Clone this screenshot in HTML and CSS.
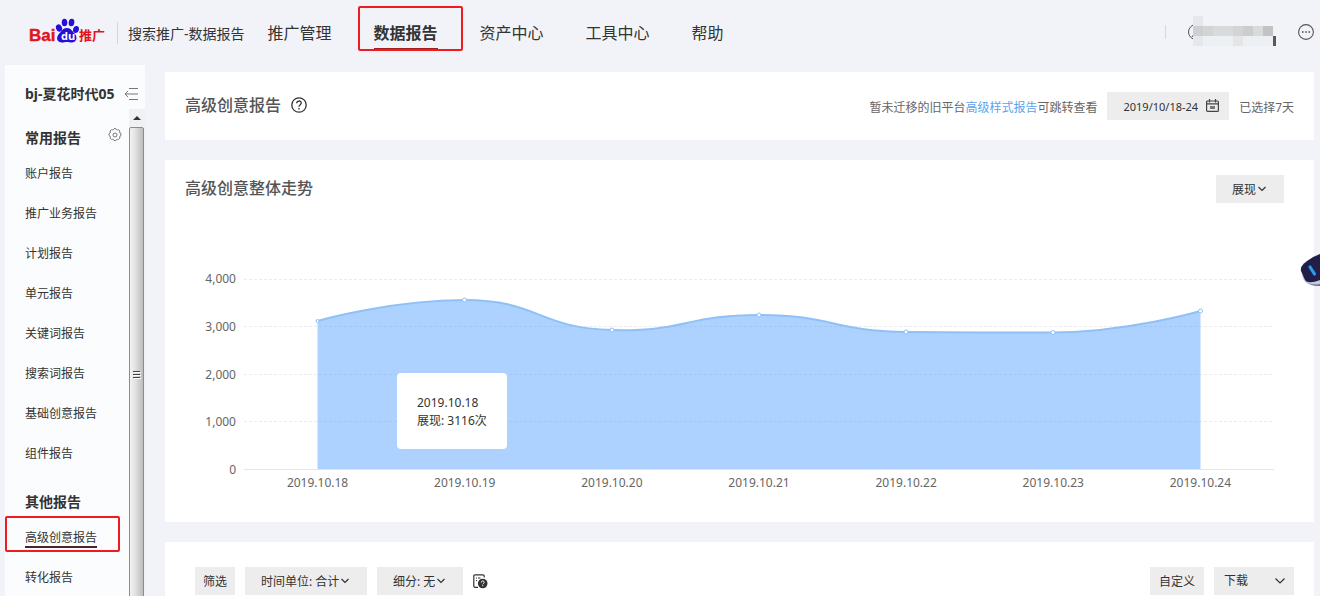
FILE: index.html
```html
<!DOCTYPE html>
<html lang="zh-CN">
<head>
<meta charset="utf-8">
<title>搜索推广-数据报告</title>
<link rel="stylesheet" href="styles.css">
</head>
<body>
<header class="topbar">
  <a class="logo" href="#" aria-label="Baidu 推广">
    <svg width="78" height="28" viewBox="0 0 78 28">
      <text class="logo-bai" x="0" y="24">Bai</text>
      <g fill="#2610d8">
        <ellipse cx="30" cy="11" rx="3" ry="3.8" transform="rotate(-20 30 11)"/>
        <ellipse cx="35.500" cy="5.500" rx="2.800" ry="3.800"/>
        <ellipse cx="42.500" cy="5.500" rx="2.800" ry="3.800" transform="rotate(10 42.500 5.500)"/>
        <ellipse cx="47" cy="12.500" rx="2.900" ry="3.600" transform="rotate(15 47 12.500)"/>
        <path d="M38 11c4 0 5 3 8 6 3 4 1 8.500-3 8.500-2 0-3-.5-5-.5s-3 .5-5 .5c-4.500 0-6.500-4-3.500-8 3-3 4-6.500 8.500-6.500z"/>
      </g>
      <text class="logo-du" x="32" y="23">du</text>
      <text class="logo-cn" x="50" y="23">推广</text>
    </svg>
  </a>
  <span class="product">搜索推广-数据报告</span>
  <nav class="nav">
    <a href="#">推广管理</a>
    <a class="current" href="#">数据报告</a>
    <a href="#">资产中心</a>
    <a href="#">工具中心</a>
    <a href="#">帮助</a>
  </nav>
  <div class="account">
    <svg class="account-name" width="90" height="32" viewBox="0 0 90 32" aria-hidden="true">
      <circle cx="9" cy="16" r="7.500" fill="none" stroke="#555"/>
      <path d="M5 21l2-3" stroke="#555"/>
      <path fill="#e3e8ec" d="M6 0h10v30H6z"/>
      <path fill="#cfcfcf" d="M6 10h10v10H6z"/>
      <path fill="#d3d4d5" d="M16 10h10v10H16zM46 10h10v10H46z"/>
      <path fill="#d8dadb" d="M26 10h20v10H26zM66 10h10v10H66z"/>
      <path fill="#cdcdcd" d="M56 10h10v10H56z"/>
      <path fill="#c3c3c3" d="M76 10h10v10H76z"/>
      <path fill="#edf0f3" d="M16 20h30v10H16zM56 20h30v10H56z"/>
      <path fill="#e4e5e6" d="M46 20h10v10H46z"/>
      <path fill="#58595b" d="M86 20h3v10h-3z"/>
    </svg>
    <button class="icon-button" aria-label="更多">
      <svg width="16" height="16" viewBox="0 0 16 16"><circle cx="8" cy="8" r="7.400" fill="none" stroke="#555" stroke-width="1.100"/><path fill="#444" d="M4 7.200h1.500v1.500H4zM7.250 7.200h1.500v1.500h-1.500zM10.500 7.200H12v1.500h-1.500z"/></svg>
    </button>
  </div>
</header>

<div class="body">
  <aside class="sidebar">
    <div class="side-title">
      <span>bj-夏花时代05</span>
      <button class="icon-button" aria-label="收起">
        <svg width="15" height="14" viewBox="0 0 15 14" fill="none" stroke="#777"><path d="M5 1.500h9M1 7h13M5 12.500h9M4 4L1 7l3 3"/></svg>
      </button>
    </div>
    <div class="side-scroll">
      <div class="side-list">
        <section>
          <h2>常用报告
            <button class="icon-button" aria-label="设置">
              <svg width="14" height="14" viewBox="0 0 14 14" fill="none" stroke="#777"><circle cx="7" cy="7" r="2"/><path d="M5.600 1.500L6.100.6h1.800l.5.900 1.200.5 1-.3 1.300 1.300-.3 1 .5 1.200.9.500v1.800l-.9.500-.5 1.200.3 1-1.300 1.300-1-.3-1.200.5-.5.900H6.100l-.5-.9-1.200-.5-1 .3-1.300-1.300.3-1-.5-1.200-.9-.5V5.700l.9-.5.500-1.200-.3-1 1.300-1.300 1 .3z"/></svg>
            </button>
          </h2>
          <ul>
            <li><a href="#">账户报告</a></li>
            <li><a href="#">推广业务报告</a></li>
            <li><a href="#">计划报告</a></li>
            <li><a href="#">单元报告</a></li>
            <li><a href="#">关键词报告</a></li>
            <li><a href="#">搜索词报告</a></li>
            <li><a href="#">基础创意报告</a></li>
            <li><a href="#">组件报告</a></li>
          </ul>
        </section>
        <section>
          <h2>其他报告</h2>
          <ul>
            <li class="current"><a href="#">高级创意报告</a></li>
            <li><a href="#">转化报告</a></li>
          </ul>
        </section>
      </div>
      <div class="scrollbar" aria-hidden="true">
        <div class="scroll-up"><svg width="8" height="4" viewBox="0 0 8 4"><path d="M4 0l4 4H0z" fill="#333"/></svg></div>
        <div class="scroll-thumb"><svg width="8" height="9" viewBox="0 0 8 9"><path d="M0 .5h7M0 3.500h7M0 6.500h7" stroke="#444"/><path d="M1 1.500h7M1 4.500h7M1 7.500h7" stroke="#fff"/></svg></div>
      </div>
    </div>
  </aside>

  <main class="content">
    <section class="card heading-card">
      <h1>高级创意报告</h1>
      <button class="icon-button help" aria-label="帮助">
        <svg width="16" height="16" viewBox="0 0 16 16" fill="none" stroke="#333" stroke-width="1.300"><circle cx="8" cy="8" r="7.200"/><path d="M5.700 6.300c0-3 4.600-3 4.600-.2 0 1.700-2.300 1.700-2.300 3.600M8 11v1.500"/></svg>
      </button>
      <p class="note">暂未迁移的旧平台<a href="#">高级样式报告</a>可跳转查看</p>
      <button class="date"><span>2019/10/18-24</span>
        <svg width="13" height="13" viewBox="0 0 13 13" fill="none" stroke="#444" stroke-width="1.200"><rect x=".6" y="2" width="11.800" height="10.400" rx="1"/><path d="M.6 4.800h11.800M3.500 0v3.500M9.500 0v3.500"/><path d="M4 7h5v3H4z" fill="#777" stroke="none"/></svg>
      </button>
      <span class="days">已选择7天</span>
    </section>

    <section class="card chart-card">
      <div class="chart-head">
        <h2>高级创意整体走势</h2>
        <div class="dropdown">
          <select aria-label="指标"><option>展现</option></select>
          <svg width="8" height="6" viewBox="0 0 8 6"><path d="M.5 1L4 4.500 7.500 1"/></svg>
        </div>
      </div>
      <div class="chart">
        <div class="y-axis"><span>4,000</span><span>3,000</span><span>2,000</span><span>1,000</span><span>0</span></div>
        <div class="plot">
          <svg class="plot-drawing" viewBox="0 0 1030 191" preserveAspectRatio="none" role="img" aria-label="展现走势">
            <path class="area" d="M73.500 42C73.500 42 147 21 220.500 21C294 21 294 49 368 51C441 53 441 36 515 36C588 36 588 52 662 53C735 53.500 735 53.500 809 53.500C882 53.500 956.500 32 956.500 32V190H73.500Z"/>
            <path class="grid" d="M0 .5H1030M0 47.500H1030M0 95.500H1030M0 142.500H1030"/>
            <path class="axis" d="M0 190.500H1030"/>
            <path class="line" d="M73.500 42C73.500 42 147 21 220.500 21C294 21 294 49 368 51C441 53 441 36 515 36C588 36 588 52 662 53C735 53.500 735 53.500 809 53.500C882 53.500 956.500 32 956.500 32"/>
            <g class="points"><circle cx="73.500" cy="42" r="1.500"/><circle cx="220.500" cy="21" r="2"/><circle cx="368" cy="51" r="2"/><circle cx="515" cy="36" r="2"/><circle cx="662" cy="53" r="2"/><circle cx="809" cy="53.500" r="2"/><circle cx="956.500" cy="32" r="2"/></g>
          </svg>
          <div class="tooltip">2019.10.18<br>展现: 3116次</div>
        </div>
        <div class="x-axis"><span>2019.10.18</span><span>2019.10.19</span><span>2019.10.20</span><span>2019.10.21</span><span>2019.10.22</span><span>2019.10.23</span><span>2019.10.24</span></div>
      </div>
    </section>

    <section class="card toolbar">
      <button class="plain">筛选</button>
      <div class="dropdown">
        <select aria-label="时间单位"><option>时间单位: 合计</option></select>
        <svg width="8" height="6" viewBox="0 0 8 6"><path d="M.5 1L4 4.500 7.500 1"/></svg>
      </div>
      <div class="dropdown">
        <select aria-label="细分"><option>细分: 无</option></select>
        <svg width="8" height="6" viewBox="0 0 8 6"><path d="M.5 1L4 4.500 7.500 1"/></svg>
      </div>
      <button class="icon-button" aria-label="报告说明">
        <svg width="15" height="15" viewBox="0 0 15 15"><path d="M5 13.400H2A1.200 1.200 0 0 1 .8 12V2A1.200 1.200 0 0 1 2 .8h8A1.200 1.200 0 0 1 11.200 2v1.500M3 4h1M5 4h2.500M3 6.500h1" fill="none" stroke="#333" stroke-width="1.200"/><circle cx="9.700" cy="9.500" r="4.800" fill="#333"/><path d="M8.300 8.500c0-2 2.900-2 2.900-.1 0 1-1.400 1-1.400 2M9.700 11.200v1" fill="none" stroke="#fff"/></svg>
      </button>
      <button class="plain custom">自定义</button>
      <div class="dropdown download">
        <select aria-label="下载"><option>下载</option></select>
        <svg width="10" height="6" viewBox="0 0 10 6"><path d="M.5 .5L5 5 9.500 .5"/></svg>
      </div>
    </section>
  </main>
</div>

<button class="assistant" aria-label="智能助手">
  <svg width="20" height="34" viewBox="0 0 20 34"><path d="M2 22C3 29 9 34 20 33V20z" fill="#c5c9dc"/><path d="M6 28q5 5 14 3V33Q10 33 6 28z" fill="#6b6b8d"/><path d="M1 18C0 14 3 11 7 8Q14 3 20 1v26c-8 3-13 3-15 0z" fill="#211f4a"/><path d="M10 14l4.500 7" stroke="#2b9cf0" stroke-width="3.200" stroke-linecap="round"/></svg>
</button>
</body>
</html>
```

FILE: styles.css
```css
* { box-sizing: border-box; }

body {
  margin: 0;
  height: 100vh;
  overflow: hidden;
  display: flex;
  flex-direction: column;
  background: #f2f3f8;
  color: #333;
  font: 12px/18px "Noto Sans", "Noto Sans CJK SC", sans-serif;
}

h1, h2, p, ul { margin: 0; padding: 0; }
ul { list-style: none; }
a { color: inherit; text-decoration: none; }
svg { display: block; }
button, select { font: inherit; color: inherit; border: 0; border-radius: 0; padding: 0; }

.icon-button { background: none; flex: none; }

/* Top bar */
.topbar {
  flex: none;
  display: flex;
  align-items: center;
  height: 65px;
  padding: 0 6px 0 29px;
}
.logo { padding-bottom: 4px; }
.logo-bai { font: bold 17px "Liberation Sans", sans-serif; fill: #e1141e; stroke: #e1141e; stroke-width: .4px; }
.logo-du { font: bold 11px "Open Sans", sans-serif; fill: #fff; }
.logo-cn { font: bold 13px "Noto Sans CJK SC", sans-serif; fill: #e1141e; }
.product {
  margin-left: 10px;
  padding: 2px 0 0 10px;
  border-left: 1px solid #d4d6db;
  font-size: 14px;
  line-height: 20px;
  white-space: nowrap;
}
.nav {
  display: flex;
  gap: 42px;
  margin-left: 23px;
  font-size: 16px;
  line-height: 30px;
  white-space: nowrap;
}
.nav .current {
  position: relative;
  font-weight: bold;
  box-shadow: 0 2px #a51c1c;
}
.nav .current::after {
  content: "";
  position: absolute;
  inset: -12px -25px -3px -16px;
  border: 2px solid #ee1c20;
  border-radius: 2px;
}
.account {
  display: flex;
  align-items: center;
  margin-left: auto;
  padding-bottom: 2px;
  gap: 21px;
}
.account::before {
  content: "";
  height: 14px;
  border-left: 1px solid #d4d6db;
}

/* Sidebar */
.body { flex: 1; min-height: 0; display: flex; padding: 0 6px 0 5px; }
.sidebar {
  flex: none;
  width: 140px;
  display: flex;
  flex-direction: column;
  background: #fafcfd;
}
.side-title {
  flex: none;
  display: flex;
  align-items: center;
  justify-content: space-between;
  height: 44px;
  padding: 14px 6px 0 20px;
  font-size: 14px;
  font-weight: bold;
  white-space: nowrap;
}
.side-scroll { flex: 1; min-height: 0; display: flex; overflow: hidden; }
.side-list {
  flex: 1;
  display: flex;
  flex-direction: column;
  gap: 13px;
  padding: 14px 0 0 20px;
}
.side-list h2 {
  display: flex;
  justify-content: space-between;
  padding-right: 7px;
  font-size: 14px;
  line-height: 30px;
}
.side-list h2 .icon-button { height: 24px; }
.side-list ul { padding-top: 1px; }
.side-list li { line-height: 40px; }
.side-list .current { position: relative; }
.side-list .current a { border-bottom: 2px solid #4a2528; }
.side-list .current::after {
  content: "";
  position: absolute;
  inset: -2px 9px 6px -20px;
  border: 2px solid #ee1c20;
  border-radius: 2px;
}
.scrollbar { flex: none; width: 16px; background: #f0f1f2; }
.scroll-up { display: grid; place-items: center; height: 18px; }
.scroll-thumb {
  display: grid;
  place-items: center;
  height: 496px;
  width: 15px;
  border: 1px solid #8c8c8c;
  border-radius: 2px;
  background: linear-gradient(to right, #f3f3f3, #e2e2e2 40%, #bdbdbd);
}

/* Cards */
.content {
  flex: 1;
  min-width: 0;
  display: flex;
  flex-direction: column;
  gap: 20px;
  margin-left: 20px;
  padding-top: 7px;
}
.card { flex: none; background: #fff; }
.card h1, .card h2 { font-size: 16px; line-height: 26px; font-weight: 500; color: #555; }
.heading-card { display: flex; align-items: center; gap: 10px; padding: 20px; }
.heading-card h1 { padding-bottom: 2px; }
.help { padding-bottom: 3px; }
.note { margin-left: auto; padding-top: 3px; color: #666; }
.note a { color: #5da3ec; }
.days { padding-top: 3px; color: #666; }
.date {
  display: flex;
  align-items: center;
  gap: 8px;
  height: 28px;
  padding: 0 10px 0 16px;
  background: #ededed;
  font-size: 11px;
}
.date span { padding-top: 2px; }
.date svg { margin-bottom: 2px; }
.chart-card { padding: 15px 40px 30px 20px; }
.chart-head { display: flex; justify-content: space-between; margin-right: -10px; }
.dropdown { display: grid; align-items: center; height: 28px; background: #ededed; }
.dropdown select, .dropdown svg { grid-area: 1 / 1; }
.dropdown select {
  appearance: none;
  height: 28px;
  padding: 2px 27px 0 16px;
  background: transparent;
}
.dropdown svg {
  justify-self: end;
  margin-right: 18px;
  fill: none;
  stroke: #333;
  stroke-width: 1.2;
  pointer-events: none;
}

/* Chart */
.chart {
  display: grid;
  grid-template-columns: 51px 1fr;
  column-gap: 8px;
  margin-top: 76px;
  color: #666;
}
.y-axis {
  display: flex;
  flex-direction: column;
  justify-content: space-between;
  margin: -9px 0;
  text-align: right;
}
.plot { position: relative; }
.plot-drawing { width: 100%; height: 191px; }
.plot-drawing path { fill: none; vector-effect: non-scaling-stroke; }
.plot-drawing .area { fill: #add2ff; }
.plot-drawing .grid { stroke: #7d8794; stroke-opacity: .16; stroke-dasharray: 3 2; }
.axis { stroke: #e3e5e8; }
.line { stroke: #8fc1f7; stroke-width: 2; }
.points { fill: #fff; stroke: #8fc1f7; }
.tooltip {
  position: absolute;
  left: 153px;
  top: 94px;
  padding: 21px 20px 19px;
  border-radius: 4px;
  background: #fff;
  color: #333;
  white-space: nowrap;
}
.x-axis {
  grid-column: 2;
  display: grid;
  grid-template-columns: repeat(7, 1fr);
  padding-top: 4px;
  text-align: center;
}

/* Table toolbar */
.toolbar { display: flex; align-items: center; gap: 10px; padding: 25px 20px 25px 30px; }
.plain { height: 28px; padding: 2px 8px 0; background: #ededed; }
.custom { margin-left: auto; padding: 2px 9px 0; }
.download select { width: 80px; padding: 0 30px 0 10px; }
.download svg { margin-right: 9px; }

.assistant { position: fixed; right: 0; top: 253px; background: none; }
```
